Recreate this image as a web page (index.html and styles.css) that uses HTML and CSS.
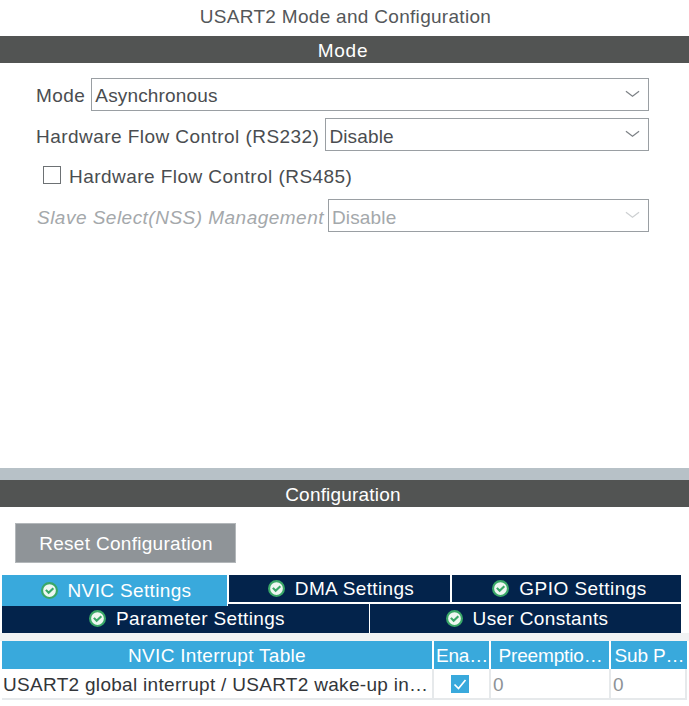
FILE: index.html
```html
<!DOCTYPE html>
<html lang="en">
<head>
<meta charset="utf-8">
<title>USART2 Mode and Configuration</title>
<link rel="stylesheet" href="styles.css">
</head>
<body>
<svg class="defs" width="0" height="0" aria-hidden="true">
  <symbol id="ok" viewBox="0 0 16 16">
    <circle cx="8" cy="8" r="7" fill="#eef7f1" stroke="#3aa868" stroke-width="2"/>
    <path d="M4.6 7.4 7.2 10.2 11.6 5.8" fill="none" stroke="#3aa868" stroke-width="2"/>
  </symbol>
  <symbol id="chev" viewBox="0 0 16 8">
    <path d="M1 1 8 6.5 15 1" fill="none" stroke="currentColor" stroke-width="1.3"/>
  </symbol>
</svg>
<main class="page">
  <h1 class="title">USART2 Mode and Configuration</h1>
  <h2 class="bar bar-mode">Mode</h2>
  <section class="mode">
    <div class="row">
      <label class="lbl">Mode</label>
      <div class="select"><span>Asynchronous</span><svg class="chev"><use href="#chev"/></svg></div>
    </div>
    <div class="row low">
      <label class="lbl">Hardware Flow Control (RS232)</label>
      <div class="select"><span>Disable</span><svg class="chev"><use href="#chev"/></svg></div>
    </div>
    <div class="row low check-row">
      <span class="box"></span>
      <label class="lbl">Hardware Flow Control (RS485)</label>
    </div>
    <div class="row low disabled">
      <label class="lbl">Slave Select(NSS) Management</label>
      <div class="select"><span>Disable</span><svg class="chev"><use href="#chev"/></svg></div>
    </div>
  </section>
  <div class="splitter"></div>
  <h2 class="bar bar-config">Configuration</h2>
  <section class="config">
    <button class="reset" type="button">Reset Configuration</button>
    <div class="tabs">
      <div class="tab-row first">
        <div class="tab active"><svg class="ok"><use href="#ok"/></svg>NVIC Settings</div>
        <div class="tab dma"><svg class="ok"><use href="#ok"/></svg>DMA Settings</div>
        <div class="tab gpio"><svg class="ok"><use href="#ok"/></svg>GPIO Settings</div>
      </div>
      <div class="tab-row second">
        <div class="tab param"><svg class="ok"><use href="#ok"/></svg>Parameter Settings</div>
        <div class="tab user"><svg class="ok"><use href="#ok"/></svg>User Constants</div>
      </div>
    </div>
    <div class="panel">
      <div class="grid head">
        <div>NVIC Interrupt Table</div>
        <div>Ena…</div>
        <div>Preemptio…</div>
        <div>Sub P…</div>
      </div>
      <div class="grid body">
        <div class="name">USART2 global interrupt / USART2 wake-up in…</div>
        <div class="center"><span class="tick"><svg viewBox="0 0 18 18"><path d="M3.5 9.5 7.5 13.5 14.5 5" fill="none" stroke="#fff" stroke-width="1.7"/></svg></span></div>
        <div class="num">0</div>
        <div class="num">0</div>
      </div>
    </div>
  </section>
</main>
</body>
</html>
```

FILE: styles.css
```css
* { box-sizing: border-box; }
html, body { margin: 0; background: #fff; }
body { width: 689px; height: 706px; overflow: hidden; font: 19px "Liberation Sans", Arial, sans-serif; letter-spacing: 0.3px; color: #4a4d50; }
.defs { position: absolute; }
.page { display: flex; flex-direction: column; height: 706px; }
.title { margin: 0; height: 36px; line-height: 33px; padding-left: 2px; font-size: 19px; font-weight: 400; text-align: center; color: #54575a; }
.bar { margin: 0; height: 27px; line-height: 29px; font-size: 19px; font-weight: 400; text-align: center; color: #fff; background: #525453; }
.bar-mode { letter-spacing: 0.7px; padding-right: 3px; }
.bar-config { letter-spacing: 0.2px; padding-right: 3px; }

.mode { height: 405px; padding: 15px 40px 0 36px; display: flex; flex-direction: column; gap: 7px; }
.row { display: flex; align-items: center; height: 33px; gap: 6px; }
.lbl { white-space: nowrap; letter-spacing: 0.45px; padding-top: 3px; }
.select { flex: 1; height: 33px; border: 1px solid #9a9fa3; display: flex; align-items: center; justify-content: space-between; padding: 0 8px 0 3px; color: #4a4d50; letter-spacing: 0.15px; }
.select span { padding-top: 3px; }
.low .lbl, .low .select span { padding-top: 5px; }
.chev { width: 15px; height: 8px; color: #7d8286; margin-bottom: 2px; }
.check-row { padding-left: 7px; gap: 8px; }
.box { width: 18px; height: 18px; border: 1.5px solid #6d7174; background: #fff; }
.disabled { color: #a4a8ab; margin-top: 1px; gap: 4px; }
.disabled .lbl { font-style: italic; letter-spacing: 0.48px; padding-left: 1px; }
.disabled .select { color: #a4a8ab; }
.disabled .chev { color: #cdd0d2; }

.splitter { height: 12px; background: #b7c1c7; }
.config { flex: 1; display: flex; flex-direction: column; min-height: 0; }
.reset { align-self: flex-start; margin: 16px 0 12px 15px; width: 221px; height: 40px; border: 1px solid #b3b7ba; background: #8f9498; color: #fff; font: inherit; letter-spacing: 0.3px; padding: 2px 0 0 1px; }

.tabs { display: flex; flex-direction: column; margin-left: 2px; width: 679px; letter-spacing: 0.35px; }
.tab-row { display: flex; }
.first { height: 29px; gap: 2px; }
.second { height: 29px; gap: 1px; }
.tab { display: flex; align-items: center; justify-content: center; color: #fff; background: #03234b; gap: 10px; height: 27px; line-height: 29px; padding-left: 3px; }
.second .tab { height: 29px; }
.active { position: relative; z-index: 1; width: 226px; height: 31px; line-height: 31px; background: #39a9dc; margin-right: -1px; border-right: 1px solid #fff; }
.dma { width: 221px; }
.gpio { flex: 1; letter-spacing: 0.45px; padding-left: 6px; }
.param { width: 367px; }
.user { flex: 1; }
.ok { width: 17px; height: 17px; flex: none; }

.panel { flex: 1; background: #fff; border-top: 8px solid #f1f3f4; padding: 0 0 0 2px; }
.grid { display: grid; grid-template-columns: 430px 55px 118px 76px; gap: 0 2px; }
.head div { height: 28px; line-height: 30px; background: #39a9dc; color: #fff; text-align: center; white-space: nowrap; overflow: hidden; }
.head div + div { letter-spacing: -0.15px; padding-left: 1px; }
.body { background: #fff; height: 31px; width: 685px; border-bottom: 2px solid #e6e9eb; gap: 0; grid-template-columns: 432px 57px 120px 76px; }
.body div { line-height: 32px; white-space: nowrap; overflow: hidden; border-right: 2px solid #e6e9eb; }
.name { color: #33363a; padding-left: 1px; }
.center { display: flex; align-items: center; justify-content: center; }
.tick { display: block; width: 18px; height: 18px; margin-right: 3px; background: #39a9dc; }
.tick svg { display: block; width: 18px; height: 18px; }
.num { color: #8e9397; padding-left: 2px; }
```
